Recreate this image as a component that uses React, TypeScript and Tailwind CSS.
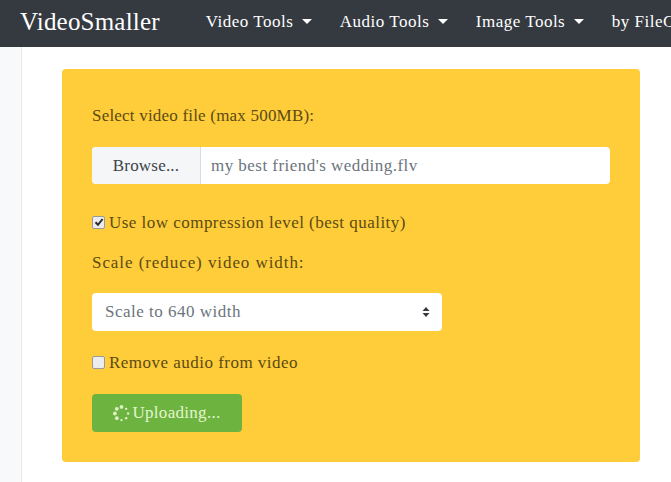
const serif = "font-['Liberation_Serif','Noto_Serif',serif]";

const navItems = ['Video Tools', 'Audio Tools', 'Image Tools'];

function Caret() {
  return <span className="ml-[9px] inline-block h-0 w-0 border-x-[5px] border-t-[5px] border-x-transparent border-t-white align-[3px]" />;
}

function Spinner() {
  const dots = [0, 45, 90, 135, 180, 225, 270, 315];
  return (
    <svg width="17" height="17" viewBox="0 0 17 17" className="mr-[2px]">
      {dots.map((a, i) => {
        const rad = (a * Math.PI) / 180;
        return (
          <circle
            key={a}
            cx={8.5 + 6.6 * Math.cos(rad)}
            cy={8.5 + 6.6 * Math.sin(rad)}
            r={i > 2 && i < 7 ? 1.9 : 1.2}
            fill="#dff0c8"
          />
        );
      })}
    </svg>
  );
}

function Check({ checked }: { checked?: boolean }) {
  return (
    <span className="mb-[2px] mr-[4px] flex h-[13px] w-[13px] shrink-0 items-center justify-center rounded-[2px] border border-[#9a9a9a] bg-[#ececec]">
      {checked && (
        <svg width="10" height="10" viewBox="0 0 10 10">
          <path d="M1.5 5.2 4 7.8 8.6 2" fill="none" stroke="#2b2b33" strokeWidth="2" />
        </svg>
      )}
    </span>
  );
}

export default function App() {
  return (
    <div className={`${serif} flex h-[482px] w-[671px] flex-col overflow-hidden bg-white text-[#212529]`}>
      <nav className="flex h-[47px] shrink-0 items-center overflow-hidden whitespace-nowrap bg-[#343a40] pb-[3px] pl-5 text-white">
        <span className="mr-[46px] text-[25px] tracking-[0.2px]">VideoSmaller</span>
        {navItems.map((item) => (
          <span key={item} className="mr-[27.5px] flex-none text-[17px] tracking-[0.5px]">
            {item}
            <Caret />
          </span>
        ))}
        <span className="text-[17px] tracking-[0.5px]">by FileC</span>
      </nav>

      <div className="flex flex-1">
        <div className="w-[22px] shrink-0 border-r border-[#e6e8ea] bg-[#f8f9fa]" />
        <div className="pl-10 pt-[22px]">
          <form className="flex h-[393px] w-[578px] flex-col rounded-[4px] bg-[#ffcd39] pl-[30px] pt-[36px] text-[17px] text-[#5c4a14]">
            <label className="h-[24px] leading-[22px] tracking-[0.2px]">Select video file (max 500MB):</label>

            <div className="mt-[18px] flex h-[37px] w-[518px] overflow-hidden rounded-[4px] bg-white">
              <span className="flex w-[109px] items-center justify-center border-r border-[#d5dbe0] bg-[#f4f6f8] tracking-[0.2px] text-[#3d4349]">
                Browse...
              </span>
              <span className="flex items-center pl-[10px] tracking-[0.46px] text-[#6c757d]">my best friend's wedding.flv</span>
            </div>

            <label className="mt-[28px] flex h-[22px] items-center tracking-[0.47px]">
              <Check checked />
              Use low compression level (best quality)
            </label>

            <label className="mt-[18px] h-[22px] leading-[22px] tracking-[0.93px]">Scale (reduce) video width:</label>

            <div className="mt-[19px] flex h-[38px] w-[350px] items-center justify-between rounded-[4px] bg-white pl-[13px] pr-[12px] tracking-[0.5px] text-[#6c757d]">
              <span>Scale to 640 width</span>
              <svg width="8" height="12" viewBox="0 0 8 12">
                <path d="M4 1 7.5 5H.5zM4 11 .5 7h7z" fill="#343a40" />
              </svg>
            </div>

            <label className="mt-[21px] flex h-[22px] items-center tracking-[0.48px]">
              <Check />
              Remove audio from video
            </label>

            <button
              type="button"
              className="mt-[20px] flex h-[38px] w-[150px] items-center justify-center rounded-[4px] bg-[#6db33f] tracking-[0.3px] text-[#e4f5cf]"
            >
              <Spinner />
              Uploading...
            </button>
          </form>
        </div>
      </div>
    </div>
  );
}
